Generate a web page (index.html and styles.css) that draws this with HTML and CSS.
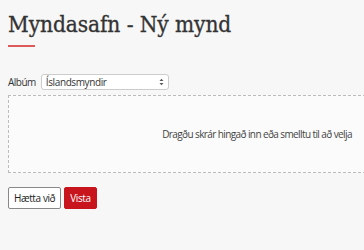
FILE: index.html
```html
<!DOCTYPE html>
<html lang="is">
<head>
  <meta charset="UTF-8">
  <title>Myndasafn - Ný mynd</title>
  <link rel="stylesheet" href="styles.css">
</head>
<body>
  <div class="page">
    <h1 class="title">Myndasafn - Ný mynd</h1>
    <div class="rule"></div>

    <div class="field">
      <label for="album">Albúm</label>
      <div class="select">
        <span>Íslandsmyndir</span>
        <svg width="5" height="8" viewBox="0 0 5 8">
          <path d="M0.5 3 L2.5 0.8 L4.5 3 Z M0.5 5 L2.5 7.2 L4.5 5 Z" fill="#555"/>
        </svg>
      </div>
    </div>

    <div class="dropzone">
      <span>Dragðu skrár hingað inn eða smelltu til að velja</span>
    </div>

    <div class="actions">
      <button class="btn">Hætta við</button>
      <button class="btn primary">Vista</button>
    </div>
  </div>
</body>
</html>
```

FILE: styles.css
```css
html, body {
  margin: 0;
  padding: 0;
  background: #f7f7f7;
  overflow: hidden;
}
.page {
  padding: 8px 8px 0;
  font-family: "Open Sans", sans-serif;
  color: #333;
}
.title {
  margin: 0;
  padding-top: 3px;
  font-family: "DejaVu Serif Condensed", "DejaVu Serif", serif;
  font-weight: normal;
  font-size: 22.5px;
  line-height: 26px;
  letter-spacing: -0.1px;
  color: #333;
  -webkit-text-stroke: 0.3px #333;
}
.rule {
  width: 27px;
  height: 2px;
  background: #de5a5a;
  margin-top: 8px;
}
.field {
  display: flex;
  align-items: center;
  gap: 5px;
  margin-top: 27px;
  font-size: 10px;
}
.field label {
  letter-spacing: -0.5px;
}
.select {
  width: 118px;
  height: 14px;
  border: 1px solid #ccc;
  border-radius: 3px;
  background: #fff;
  display: flex;
  align-items: center;
  justify-content: space-between;
  padding: 0 4px;
  letter-spacing: -0.4px;
}
.dropzone {
  width: 496px;
  height: 76px;
  margin-top: 5px;
  border: 1px dashed #bbb;
  background: #fbfbfb;
  display: flex;
  align-items: center;
  justify-content: center;
  font-size: 10px;
  letter-spacing: -0.6px;
  color: #444;
}
.actions {
  display: flex;
  gap: 3px;
  margin-top: 14px;
}
.btn {
  height: 22px;
  padding: 0 5px;
  border: 1px solid #888;
  border-radius: 2px;
  background: #fff;
  font-family: "Open Sans", sans-serif;
  font-size: 10px;
  letter-spacing: -0.4px;
  color: #222;
}
.btn.primary {
  background: #c8141c;
  border-color: #c8141c;
  color: #fff;
  padding: 0 5px;
}
```
